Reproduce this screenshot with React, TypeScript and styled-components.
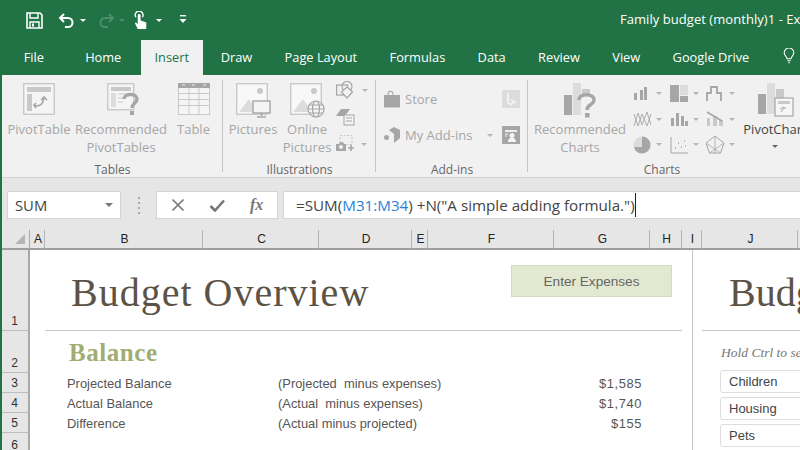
import React from "react";
import styled, { createGlobalStyle } from "styled-components";

const GREEN = "#217346";
const G1 = "#a6a6a6";
const G2 = "#c9c9c9";
const G3 = "#dcdcdc";

const Global = createGlobalStyle`
  html, body { margin: 0; padding: 0; width: 800px; height: 450px; overflow: hidden; background: #fff; }
  #root { width: 800px; height: 450px; }
  * { box-sizing: border-box; }
`;
const Page = styled.div`
  width: 800px; height: 450px; overflow: hidden; display: flex; flex-direction: column;
  font-family: "Open Sans", "Noto Sans", sans-serif; background: ${GREEN};
`;
const TitleBar = styled.header`
  height: 40px; flex: none; display: grid; grid-template-columns: 620px 1fr; align-items: center; color: #fff;
`;
const Qat = styled.div`display: flex; align-items: center; padding-left: 26px; height: 100%;`;
const QatSlot = styled.span<{ $w: number }>`display: flex; align-items: center; justify-content: flex-start; width: ${p => p.$w}px;`;
const Caret = styled.i<{ $c?: string; $s?: number }>`
  display: block; width: 0; height: 0; border-left: ${p => p.$s ?? 3.5}px solid transparent; border-right: ${p => p.$s ?? 3.5}px solid transparent;
  border-top: ${p => p.$s ?? 3.5}px solid ${p => p.$c ?? "#fff"}; flex: none;
`;
const Title = styled.div`font-size: 13px; white-space: nowrap; overflow: hidden; letter-spacing: .05px; padding-bottom: 2px;`;
const TabBar = styled.nav`height: 35px; flex: none; display: flex; padding-left: 7.5px; align-items: stretch;`;
const Tab = styled.div<{ $active?: boolean; $pr?: number }>`
  display: flex; align-items: center; font-size: 12.8px; white-space: nowrap; padding: 0 ${p => p.$pr ?? 16.2}px 2px 16.2px; color: ${p => (p.$active ? GREEN : "#fff")};
  background: ${p => (p.$active ? "#f1f1f1" : "transparent")};
  ${p => p.$active ? "margin: 0 1.500px 0 3px; padding-left: 14px; padding-right: 14px;" : ""}
`;
const Bulb = styled.span`margin-left: 17px; display: flex; align-items: center; padding-bottom: 3px;`;
const Main = styled.main`flex: 1; min-height: 0; border-left: 2px solid ${GREEN}; background: #e6e6e6; display: flex; flex-direction: column;`;
const Ribbon = styled.section`
  height: 103px; flex: none; background: #f1f1f1; display: flex; border-bottom: 1px solid #d4d4d4; overflow: hidden;
`;
const Group = styled.div<{ $w: number; $div?: boolean }>`
  width: ${p => p.$w}px; flex: none; display: flex; flex-direction: column; position: relative;
  ${p => p.$div ? "&::after{content:'';position:absolute;right:0;top:5px;bottom:5px;width:1px;background:#c6c6c6;}" : ""}
`;
const GroupBody = styled.div`height: 87px; display: flex; flex: none;`;
const GroupLabel = styled.div`font-size: 12px; color: #666; text-align: center; line-height: 15px; height: 15px;`;
const BigButton = styled.div<{ $w: number; $ml?: number; $mr?: number; $on?: boolean }>`
  width: ${p => p.$w}px; flex: none; margin-left: ${p => p.$ml ?? 0}px; margin-right: ${p => p.$mr ?? 0}px;
  display: flex; flex-direction: column; align-items: center; padding-top: 8px;
  font-size: 13px; line-height: 18px; color: ${p => (p.$on ? "#444" : G1)}; text-align: center; white-space: nowrap;
`;
const IconBox = styled.span<{ $ox?: number }>`height: 37px; display: flex; align-items: flex-start; justify-content: center; flex: none; padding-left: ${p => p.$ox ?? 0}px;`;
const CaretLine = styled.span`display: flex; justify-content: center; padding-top: 7px;`;
const SmallColumn = styled.div`display: flex; flex-direction: column; padding: 6px 0 0 5px; gap: 9px; width: 44px;`;
const SmallRow = styled.div`display: flex; align-items: center; gap: 6px; height: 18px;`;
const AddInGroup = styled.div`flex: 1; display: flex; flex-direction: column; padding: 15px 8px 0 8px; gap: 18px;`;
const AddInRow = styled.div`display: flex; align-items: center; justify-content: space-between; height: 18px;`;
const AddInLabel = styled.span`display: flex; align-items: center; gap: 5px; font-size: 13px; color: ${G1};`;
const AddInEnd = styled.span`display: flex; align-items: center; gap: 9px;`;
const ChartGrid = styled.div`
  width: 105px; flex: none; display: grid; grid-template-columns: repeat(3, 36.5px); grid-auto-rows: 25.5px; padding: 6px 0 0 1px; margin-right: -6px;
`;
const ChartCell = styled.span`display: flex; align-items: center; gap: 4px;`;
const FormulaRow = styled.div`
  height: 52px; flex: none; padding: 13px 0 11px 5px; display: flex; align-items: stretch;
`;
const NameBox = styled.div`
  width: 114px; background: #fff; border: 1px solid #d4d4d4; display: flex; align-items: center; justify-content: space-between;
  padding: 0 7px 0 7px; font-size: 14.8px; color: #444;
`;
const Grip = styled.span`
  width: 35px; display: flex; flex-direction: column; align-items: center; justify-content: center; gap: 3px;
  & > i { display: block; width: 2px; height: 2px; background: #a8a8a8; }
`;
const FxBox = styled.div`
  width: 122px; background: #fff; border: 1px solid #d4d4d4; display: flex; align-items: center; padding-left: 14px; gap: 24px;
`;
const FormulaInput = styled.div`
  flex: 1; margin-left: 5px; background: #fff; border: 1px solid #d4d4d4; border-right: 0; display: flex; align-items: center; padding-left: 12px;
  font-size: 15.2px; color: #444; white-space: pre;
`;
const Ref = styled.span`color: #2f7fd6;`;
const TextCaret = styled.span`display: inline-block; width: 1px; height: 24px; background: #222; margin-left: 0;`;
const Sheet = styled.div`
  flex: 1; min-height: 0; overflow: hidden; background: #fff; display: grid;
  grid-template-columns: 28px 15px 158px 116px 93px 16px 126px 96px 32px 20px 96px 100px;
  grid-template-rows: 20px 81px 42px 20px 20px 20px 22px;
  font-family: "Liberation Sans", Arial, sans-serif;
`;
const Corner = styled.div`
  background: #e6e6e6; border-right: 1px solid #a8a8a8; border-bottom: 2px solid #9e9e9e; position: relative;
  &::after { content: ''; position: absolute; right: 4px; bottom: 4px; width: 0; height: 0; border-left: 10px solid transparent; border-bottom: 10px solid #b5b5b5; }
`;
const ColHead = styled.div`
  background: #e6e6e6; border-right: 1px solid #b4b4b4; border-bottom: 2px solid #9e9e9e; display: flex; align-items: center; justify-content: center; padding-left: 2px;
  font-family: "Liberation Sans", Arial, sans-serif; font-size: 12px; color: #222;
`;
const RowHead = styled.div<{ $r: number }>`
  grid-column: 1; grid-row: ${p => p.$r}; background: #e6e6e6; border-right: 2px solid #a8a8a8; border-bottom: 1px solid #bdbdbd;
  display: flex; align-items: flex-end; justify-content: center; padding-right: 1px; font-size: 12px; color: #333; line-height: 17px;
`;
const TitleRow = styled.div`
  grid-column: 3 / 10; grid-row: 2; border-bottom: 1px solid #c8c8c8; display: flex; justify-content: space-between; align-items: flex-start;
`;
const BudgetTitle = styled.h1`
  margin: 20px 0 0 26px; font-family: "Liberation Serif", serif; font-weight: 400; font-size: 40px; line-height: 46px; color: #5c5346; white-space: nowrap; letter-spacing: 1px;
`;
const EnterButton = styled.div`
  width: 161px; height: 32px; margin: 15px 10px 0 0; background: #e3e9d0; border: 1px solid #d5dcbc; display: flex; align-items: center; justify-content: center;
  font-size: 13.6px; color: #666;
`;
const Divider = styled.div`grid-column: 10; grid-row: 2 / 8; position: relative; &::after { content:''; position:absolute; left: 10px; top: 0; bottom: 0; width: 1px; background: #c8c8c8; }`;
const SideTop = styled.div`
  grid-column: 11 / 13; grid-row: 2; border-bottom: 1px solid #c8c8c8; overflow: hidden;
`;
const SideTitle = styled(BudgetTitle)`margin-left: 27px; letter-spacing: 0;`;
const Heading = styled.h2`
  grid-column: 3 / 6; grid-row: 3; margin: 8px 0 0 24px; font-family: "Liberation Serif", serif; font-weight: 700; font-size: 25px; line-height: 28px; color: #9fad72; letter-spacing: .55px;
`;
const Cell = styled.div<{ $c: number | string; $r: number; $pl?: number; $right?: boolean }>`
  grid-column: ${p => p.$c}; grid-row: ${p => p.$r}; padding: 1px 0 0 ${p => p.$pl ?? 0}px; font-size: 12.9px; color: #555; line-height: 20px; white-space: pre;
  ${p => p.$right ? "text-align: right; padding-right: 8px; letter-spacing: .6px;" : ""}
`;
const SidePanel = styled.div`
  grid-column: 11 / 13; grid-row: 3 / 8; padding: 14px 0 0 18px; display: flex; flex-direction: column; gap: 4px; overflow: hidden;
`;
const Hint = styled.div`font-family: "Liberation Serif", serif; font-style: italic; font-size: 13.5px; line-height: 16px; color: #777; white-space: nowrap; margin-bottom: 5px; padding-left: 1px;`;
const Slicer = styled.div`
  height: 23px; width: 140px; flex: none; border: 1px solid #ddd; border-radius: 3px; display: flex; align-items: center; padding-left: 8px; font-size: 13px; color: #444;
`;

const Save = () => (
  <svg width="17" height="17" viewBox="0 0 17 17" fill="none" stroke="#fff" strokeWidth="1.6">
    <path d="M1 1h13l2 2v13H1z" /><path d="M4 1v5h8V1" strokeWidth="1.4" /><path d="M4 16v-6h9v6" strokeWidth="1.4" /><rect x="6" y="11.5" width="2" height="3" fill="#fff" stroke="none" />
  </svg>
);
const Undo = ({ c = "#fff", flip = false }: { c?: string; flip?: boolean }) => (
  <svg width="17" height="15" viewBox="0 0 17 15" fill="none" stroke={c} strokeWidth="2" style={flip ? { transform: "scaleX(-1)" } : undefined}>
    <path d="M6 1L2 5l4 4" /><path d="M2 5h8a4.5 4.5 0 0 1 0 9H7" />
  </svg>
);
const Touch = () => (
  <svg width="14" height="19" viewBox="0 0 15 20" fill="#fff">
    <path d="M4 19l-3-6 1-1 2 2V4.5a1.5 1.5 0 0 1 3 0V10l5 1.5c1 .4 1.4 1 1.3 2L13 19z" />
    <path d="M2 6.5A4.2 4.2 0 0 1 5.5 0 4.2 4.2 0 0 1 9 6.5" fill="none" stroke="#fff" strokeWidth="1.5" />
  </svg>
);
const Customize = () => (
  <svg width="9" height="10" viewBox="0 0 9 10" fill="#fff"><rect x="1" width="6" height="1.4" /><path d="M.5 4h7L4 8z" /></svg>
);
const BulbIcon = () => (
  <svg width="12" height="16" viewBox="0 0 14 20" fill="none" stroke="#fff" strokeWidth="1.3">
    <path d="M4.5 13.5C4.5 10.5 1 9.5 1 6a6 6 0 0 1 12 0c0 3.5-3.5 4.5-3.5 7.5z" /><path d="M5 16h4M6 18.5h2" />
  </svg>
);
const PivotTableIcon = () => (
  <svg width="32" height="32" viewBox="0 0 32 32" fill="none">
    <rect x=".7" y=".7" width="30.6" height="30.6" fill="#f5f5f5" stroke={G2} strokeWidth="1.4" />
    <rect x="4" y="4" width="24" height="5" fill={G2} /><rect x="4" y="11" width="5" height="17" fill={G2} />
    <path d="M13 25l-2-3 2-2M11.5 22.5c6 1 8-1 9.5-7M18 17l3-3 3 3" stroke={G1} strokeWidth="1.6" />
  </svg>
);
const RecommendedPivotIcon = () => (
  <svg width="32" height="35" viewBox="0 0 32 35" fill="none">
    <rect x=".7" y=".7" width="26" height="26" fill="#f5f5f5" stroke={G2} strokeWidth="1.4" />
    <rect x="4" y="4" width="20" height="4" fill={G2} /><rect x="4" y="10" width="5" height="14" fill={G3} /><path d="M11 11h8M11 15h6M11 19h5" stroke={G2} />
    <path d="M17 16c0-6 13-6 13 0 0 4-5 4-5 9" stroke={G1} strokeWidth="3.4" /><rect x="23" y="28" width="4" height="4" fill={G1} />
  </svg>
);
const TableIcon = () => (
  <svg width="32" height="32" viewBox="0 0 32 32" fill="#f5f5f5">
    <rect x=".5" y=".5" width="31" height="31" stroke={G2} />
    <rect y="0" width="32" height="5" fill={G1} />
    <path d="M0 10.5h32M0 16.5h32M0 22.5h32M11 5v27M21 5v27" stroke={G2} fill="none" />
    <path d="M4 2h3M14 2h3M25 2h3" stroke="#eee" fill="none" />
  </svg>
);
const PictureIcon = ({ globe }: { globe?: boolean }) => (
  <svg width="35" height="35" viewBox="0 0 35 35" fill="none">
    <rect x=".7" y=".7" width="30.6" height="30.6" fill="#f8f8f8" stroke={G2} strokeWidth="1.4" />
    <circle cx="24" cy="8" r="3" fill={G2} /><path d="M3 29l10-13 9 13z" fill={G3} />
    {globe ? (
      <g stroke={G1} fill="#f4f4f4" strokeWidth="1.2">
        <circle cx="26" cy="26" r="8" /><ellipse cx="26" cy="26" rx="3.5" ry="8" /><path d="M18 26h16M19 22h14M19 30h14" />
      </g>
    ) : (
      <g stroke={G1} fill="#f4f4f4" strokeWidth="1.4">
        <rect x="17" y="18" width="17" height="12" /><path d="M25.5 30v3M21 34h9" />
      </g>
    )}
  </svg>
);
const ShapesIcon = () => (
  <svg width="20" height="18" viewBox="0 0 20 18" fill="none" stroke={G1} strokeWidth="1.2">
    <rect x=".6" y="4" width="11" height="10" /><circle cx="11" cy="5.5" r="5" /><path d="M11 6l5.5 5-5.5 6-5.5-6z" fill="#f4f4f4" />
  </svg>
);
const SmartArtIcon = () => (
  <svg width="19" height="18" viewBox="0 0 19 18" fill="none">
    <path d="M0 8L5 1h9l-5 7z" fill={G1} /><rect x="8" y="7" width="10" height="10" fill="#f4f4f4" stroke={G1} /><path d="M10 10h6M10 13h6" stroke={G1} />
  </svg>
);
const ScreenshotIcon = () => (
  <svg width="19" height="18" viewBox="0 0 19 18" fill="none">
    <rect x="4" y=".5" width="12" height="9" stroke={G2} strokeDasharray="2 1.5" />
    <path d="M0 9h3l1-2h3l1 2h2v7H0z" fill={G1} /><circle cx="5" cy="12" r="2" fill="#f1f1f1" /><path d="M12 13h6M15 10v6" stroke={G1} strokeWidth="1.6" />
  </svg>
);
const StoreIcon = () => (
  <svg width="16" height="18" viewBox="0 0 16 18" fill={G1}>
    <path d="M0 5h16v12.5H0z" /><path d="M4 5c0-5 5-5 5 0" fill="none" stroke={G1} strokeWidth="1.2" />
  </svg>
);
const BingIcon = () => (
  <svg width="18" height="18" viewBox="0 0 18 18"><rect width="18" height="18" fill={G3} /><path d="M6 3v10l3 1.5 4-2.5-4-2" fill="none" stroke="#f4f4f4" strokeWidth="1.8" /></svg>
);
const AddInIcon = () => (
  <svg width="16" height="16" viewBox="0 0 16 16" fill={G1}><path d="M5 3l5-3 6 3v8l-6 5V7z" /><circle cx="2.5" cy="10.5" r="2.5" /></svg>
);
const PeopleIcon = () => (
  <svg width="18" height="18" viewBox="0 0 18 18"><rect width="18" height="18" fill={G1} /><path d="M3 4h12v2H3z" fill="#eee" /><circle cx="10" cy="9.5" r="2.5" fill="#f4f4f4" /><path d="M6 16c0-6 8-6 8 0z" fill="#f4f4f4" /><path d="M3 8h3M3 10h2" stroke="#eee" /></svg>
);
const RecommendedChartIcon = () => (
  <svg width="32" height="35" viewBox="0 0 32 35">
    <rect x="0" y="12" width="8" height="20" fill={G1} /><rect x="9" y="0" width="8" height="32" fill={G3} /><rect x="18" y="6" width="8" height="6" fill={G2} />
    <path d="M15 17c0-7 15-7 15 0 0 5-7 4-7 10" fill="none" stroke={G1} strokeWidth="3.4" /><rect x="21" y="30" width="4.5" height="4.5" fill={G1} />
  </svg>
);
const PivotChartIcon = () => (
  <svg width="42" height="34" viewBox="0 0 42 34">
    <rect x="0" y="11" width="8" height="20" fill={G1} /><rect x="9" y="0" width="8" height="31" fill={G3} /><rect x="18" y="6" width="8" height="25" fill={G2} />
    <rect x="17" y="15" width="18" height="18" fill="#f6f6f6" stroke={G1} strokeWidth="1.2" /><rect x="20" y="18" width="12" height="3" fill={G2} /><path d="M23 29l3-4M22 26l4-2 2 2" stroke={G1} fill="none" />
  </svg>
);
const M = ({ children }: { children: React.ReactNode }) => (
  <svg width="19" height="18" viewBox="0 0 19 18" fill="none">{children}</svg>
);
const miniCharts = [
  <M><path d="M1 8h3v7H1zM7 5h3v10H7z" fill={G1} /><path d="M11 2h3v13h-3z" fill={G1} /></M>,
  <M><rect width="9" height="17" x="0" fill={G1} /><rect x="10" width="8" height="10" fill={G3} /><rect x="10" y="11" width="8" height="6" fill={G1} /></M>,
  <M><path d="M1 16V8h4V2h6v6h4v8" stroke={G1} strokeWidth="1.8" /></M>,
  <M><path d="M1 16L5 3l4 12 5-13 4 13M1 4l4 12 4-12 5 12 4-12" stroke={G1} strokeWidth=".9" /></M>,
  <M><path d="M1 8h3v8H1zM6 3h3v13H6zM11 6h3v10h-3zM15 11h3v5h-3z" fill={G1} /></M>,
  <M><path d="M1 8h3v8H1zM7 6h4v10H7zM13 10h4v6h-4z" fill={G2} /><path d="M1 2l5 3 5 3 5 3" stroke={G1} strokeWidth="1.5" /></M>,
  <M><circle cx="9" cy="9" r="8.5" fill={G3} /><path d="M9 .5a8.5 8.5 0 0 1 0 17A8.5 8.5 0 0 1 1 11h8z" fill={G1} /></M>,
  <M><path d="M1 1v16h17" stroke={G1} /><path d="M5 12h1M8 7h1M11 11h1M14 5h1M15 10h1" stroke={G1} strokeWidth="1.5" /></M>,
  <M><path d="M9 0l9 7-3.5 10h-11L0 7z" stroke={G1} /><path d="M9 0v17M0 7l14.5 10M18 7L3.5 17" stroke={G1} strokeWidth=".8" /></M>,
];
const CloseX = () => (<svg width="14" height="14" viewBox="0 0 14 14" stroke="#777" strokeWidth="1.7"><path d="M1.5 1.5l11 11M12.5 1.5l-11 11" /></svg>);
const Check = () => (<svg width="16" height="13" viewBox="0 0 16 13" fill="none" stroke="#777" strokeWidth="2.6"><path d="M1.5 7l4.5 4.5L15 1.5" /></svg>);
const FxText = styled.span`font-family: "Liberation Serif", serif; font-style: italic; font-weight: 700; font-size: 16px; color: #777; margin-left: 1px;`;

const columns = ["A", "B", "C", "D", "E", "F", "G", "H", "I", "J", ""];
const rows = [
  { n: "1", r: 2 }, { n: "2", r: 3 }, { n: "3", r: 4 }, { n: "4", r: 5 }, { n: "5", r: 6 }, { n: "6", r: 7 },
];
const data = [
  { label: "Projected Balance", note: "(Projected  minus expenses)", v: "$1,585", r: 4 },
  { label: "Actual Balance", note: "(Actual  minus expenses)", v: "$1,740", r: 5 },
  { label: "Difference", note: "(Actual minus projected)", v: "$155", r: 6 },
];
const tabs = ["Draw", "Page Layout", "Formulas", "Data", "Review", "View", "Google Drive"];

export default function App() {
  return (
    <Page>
      <Global />
      <TitleBar>
        <Qat>
          <QatSlot $w={32}><Save /></QatSlot>
          <QatSlot $w={22}><Undo /></QatSlot>
          <QatSlot $w={18}><Caret /></QatSlot>
          <QatSlot $w={21}><Undo c="#4d8f6b" flip /></QatSlot>
          <QatSlot $w={15}><Caret $c="#4d8f6b" /></QatSlot>
          <QatSlot $w={22}><Touch /></QatSlot>
          <QatSlot $w={23}><Caret /></QatSlot>
          <QatSlot $w={12}><Customize /></QatSlot>
        </Qat>
        <Title>Family budget (monthly)1 - Excel</Title>
      </TitleBar>
      <TabBar>
        <Tab $pr={25}>File</Tab>
        <Tab>Home</Tab>
        <Tab $active>Insert</Tab>
        {tabs.map(t => <Tab key={t}>{t}</Tab>)}
        <Bulb><BulbIcon /></Bulb>
      </TabBar>
      <Main>
        <Ribbon>
          <Group $w={221} $div>
            <GroupBody>
              <BigButton $w={74}><IconBox><PivotTableIcon /></IconBox>PivotTable</BigButton>
              <BigButton $w={90}><IconBox $ox={4}><RecommendedPivotIcon /></IconBox>Recommended<br />PivotTables</BigButton>
              <BigButton $w={55}><IconBox><TableIcon /></IconBox>Table</BigButton>
            </GroupBody>
            <GroupLabel>Tables</GroupLabel>
          </Group>
          <Group $w={153} $div>
            <GroupBody>
              <BigButton $w={60}><IconBox><PictureIcon /></IconBox>Pictures</BigButton>
              <BigButton $w={48}><IconBox><PictureIcon globe /></IconBox>Online<br />Pictures</BigButton>
              <SmallColumn>
                <SmallRow><ShapesIcon /><Caret $c="#b5b5b5" /></SmallRow>
                <SmallRow><SmartArtIcon /></SmallRow>
                <SmallRow><ScreenshotIcon /><Caret $c="#b5b5b5" /></SmallRow>
              </SmallColumn>
            </GroupBody>
            <GroupLabel>Illustrations</GroupLabel>
          </Group>
          <Group $w={152} $div>
            <GroupBody>
              <AddInGroup>
                <AddInRow><AddInLabel><StoreIcon />Store</AddInLabel><BingIcon /></AddInRow>
                <AddInRow><AddInLabel><AddInIcon />My Add-ins</AddInLabel><AddInEnd><Caret $c="#b5b5b5" /><PeopleIcon /></AddInEnd></AddInRow>
              </AddInGroup>
            </GroupBody>
            <GroupLabel>Add-ins</GroupLabel>
          </Group>
          <Group $w={268}>
            <GroupBody>
              <BigButton $w={104}><IconBox><RecommendedChartIcon /></IconBox>Recommended<br />Charts</BigButton>
              <ChartGrid>
                {miniCharts.map((c, i) => <ChartCell key={i}>{c}<Caret $c="#b5b5b5" /></ChartCell>)}
              </ChartGrid>
              <BigButton $w={64} $ml={12} $mr={-21} $on>
                <IconBox $ox={8}><PivotChartIcon /></IconBox>PivotChart
                <CaretLine><Caret $c="#666" /></CaretLine>
              </BigButton>
            </GroupBody>
            <GroupLabel>Charts</GroupLabel>
          </Group>
        </Ribbon>
        <FormulaRow>
          <NameBox>SUM<Caret $c="#777" $s={4.5} /></NameBox>
          <Grip><i /><i /><i /><i /></Grip>
          <FxBox><CloseX /><Check /><FxText>fx</FxText></FxBox>
          <FormulaInput>=SUM(<Ref>M31:M34</Ref>) +N("A simple adding formula.")<TextCaret /></FormulaInput>
        </FormulaRow>
        <Sheet>
          <Corner />
          {columns.map((c, i) => <ColHead key={i}>{c}</ColHead>)}
          {rows.map(r => <RowHead key={r.n} $r={r.r}>{r.n}</RowHead>)}
          <TitleRow>
            <BudgetTitle>Budget Overview</BudgetTitle>
            <EnterButton>Enter Expenses</EnterButton>
          </TitleRow>
          <Divider />
          <SideTop><SideTitle>Budg</SideTitle></SideTop>
          <Heading>Balance</Heading>
          {data.map(d => (
            <React.Fragment key={d.r}>
              <Cell $c={3} $r={d.r} $pl={22}>{d.label}</Cell>
              <Cell $c="4 / 7" $r={d.r} $pl={75}>{d.note}</Cell>
              <Cell $c={8} $r={d.r} $right>{d.v}</Cell>
            </React.Fragment>
          ))}
          <SidePanel>
            <Hint>Hold Ctrl to select</Hint>
            <Slicer>Children</Slicer>
            <Slicer>Housing</Slicer>
            <Slicer>Pets</Slicer>
          </SidePanel>
        </Sheet>
      </Main>
    </Page>
  );
}
